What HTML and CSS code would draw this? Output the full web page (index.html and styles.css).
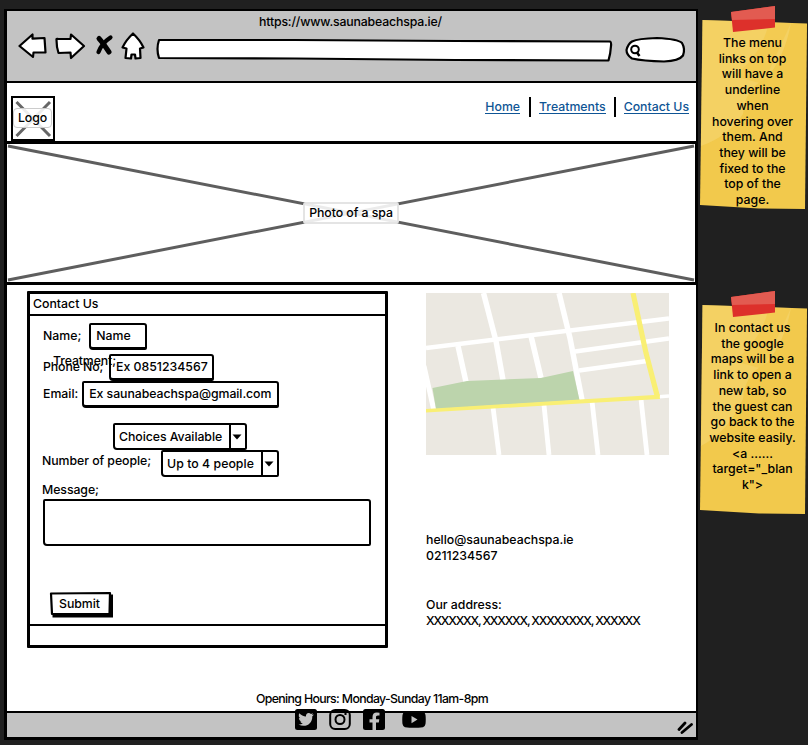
FILE: index.html
```html
<!DOCTYPE html>
<html lang="en">
<head>
<meta charset="utf-8">
<title>Sauna Beach Spa – Contact</title>
<link rel="stylesheet" href="styles.css">
</head>
<body>
<main class="board">
  <section class="browser">
    <div class="toolbar">
      <div class="url">https://www.saunabeachspa.ie/</div>
      <div class="controls">
        <svg class="nav-icons" viewBox="0 0 130 32" width="130" height="32">
          <g fill="#fff" stroke="#000" stroke-width="2.2" stroke-linejoin="round">
            <path d="M1.500 16 14.500 4.500v4.200L26.500 8 27.500 22.500 15.500 22.500 15 27Z"/>
            <path d="M38.500 10Q38 8.500 40 8.800L52.500 9 53 4.500 66 16 53 28 52.500 22.500 40.500 23Q38.500 17 38.500 10Z"/>
            <path d="M115 3.500Q122 10 125.500 17.500L122 18.500 122.500 28 117.500 28.500 117 24.500 113.500 24.500 113 28.500 107.500 28 108.500 18.500 104.500 17.500Q108 10 115 3.500Z"/>
          </g>
          <path d="M81 8.500Q85 13 91 22" stroke="#000" stroke-width="5" stroke-linecap="round" fill="none"/>
          <path d="M92.500 7.500Q84 13 80.500 22" stroke="#000" stroke-width="4.200" stroke-linecap="round" fill="none"/>
        </svg>
        <svg class="address" viewBox="0 0 458 24" width="458" height="24"><path d="M4 2 140 2 300 3 455 3.500Q456.500 4 456 8 455.500 16 453.500 22.500L300 22 140 20.500 4 20Q1 11 4 2Z" fill="#fff" stroke="#000" stroke-width="2.200" stroke-linejoin="round"/></svg>
        <svg class="search" viewBox="0 0 62 28" width="62" height="28">
          <path d="M7 5.500Q13 2.500 32 2 53 3 57 7 60.500 13 58 19.500 54 25 39 25.500 18 25 7 22.500 1.500 19 1.500 14 3 8 7 5.500Z" fill="#fff" stroke="#000" stroke-width="2.200"/>
          <circle cx="10" cy="13.500" r="3.800" fill="none" stroke="#000" stroke-width="2"/><path d="m11.500 16 3 4" stroke="#000" stroke-width="2.500"/>
        </svg>
      </div>
    </div>

    <header class="site-header">
      <div class="logo">
        <svg class="cross" viewBox="0 0 39 40" width="39" height="40"><path d="M2.500 3 36 37M36 3 2.500 37" stroke="#666" stroke-width="3"/></svg>
        <span>Logo</span>
      </div>
      <nav class="menu"><a href="#">Home</a><i></i><a href="#">Treatments</a><i></i><a href="#">Contact Us</a></nav>
    </header>

    <div class="hero">
      <svg class="cross" viewBox="0 0 690 138" width="690" height="138"><path d="M2 2 688 136M688 2 2 136" stroke="#5e5e5e" stroke-width="3"/></svg>
      <span>Photo of a spa</span>
    </div>

    <div class="content">
      <form class="panel">
        <div class="panel-title">Contact Us</div>
        <div class="panel-body">
          <div class="row"><label>Name;</label><span class="field name">Name</span></div>
          <div class="row phone-row"><label>Phone No;</label><label class="treatment">Treatment;</label><span class="field phone">Ex 0851234567</span></div>
          <div class="row"><label>Email:</label><span class="field email">Ex saunabeachspa@gmail.com</span></div>
          <div class="row choices-row"><span class="select choices"><b>Choices Available</b><svg viewBox="0 0 10 6" width="10" height="6"><path d="M.5.5h9L5 5.500Z"/></svg></span></div>
          <div class="row people-row"><label>Number of people;</label><span class="select people"><b>Up to 4 people</b><svg viewBox="0 0 10 6" width="10" height="6"><path d="M.5.5h9L5 5.500Z"/></svg></span></div>
          <label class="message-label">Message;</label>
          <div class="message"></div>
          <svg class="sketch-button" viewBox="0 0 65 27" width="65" height="27">
            <path d="M3.500 23V26.500H64V3.500H61Z"/>
            <path d="M2 2.500 61 2 60.500 23 3 23Z" fill="#fff" stroke="#000" stroke-width="2.200" stroke-linejoin="round"/>
            <text x="10" y="17.300" textLength="41">Submit</text>
          </svg>
        </div>
        <div class="panel-foot"></div>
      </form>

      <aside class="info">
        <svg class="map" viewBox="0 0 243 162" width="243" height="162">
          <rect width="243" height="162" fill="#ebe8e1"/>
          <g stroke="#fff" fill="none">
            <path d="M0 55 243 25.500" stroke-width="4.500"/>
            <path d="M57.500 0 70 48 77 87" stroke-width="5.500"/>
            <path d="M133 0 144 45 156 107" stroke-width="5.500"/>
            <path d="M32 53 40 89M105 43 115 85" stroke-width="5.500"/>
            <path d="M149 58.500 243 45.500M153 77.500 221 68" stroke-width="4.300"/>
            <path d="M-2 73 8 118" stroke-width="5"/>
            <path d="M67 114 73 162M118 112 123 162M166 108 172 162M215 106 221 162" stroke-width="4.800"/>
            <path d="M230 104 243 103" stroke-width="3.500"/>
          </g>
          <path d="M6.500 95 41 88 115 85 147 78 153.500 107 10 116Z" fill="#bcd4ac"/>
          <path d="M0 116 154 106.600 228 102 233.500 101 234 106 154 110.500 0 119.500Z" fill="#f9ef74"/>
          <path d="M207 0 220 60 231.500 104" stroke="#f9ef74" stroke-width="5.200" fill="none"/>
        </svg>
        <p class="reach">hello@saunabeachspa.ie<br>0211234567</p>
        <p class="where">Our address:<br><span>XXXXXXX, XXXXXX, XXXXXXXX, XXXXXX</span></p>
      </aside>
    </div>

    <div class="hours">Opening Hours: Monday-Sunday 11am-8pm</div>
    <footer class="statusbar">
      <div class="social">
        <svg viewBox="0 0 22 21" width="22" height="21"><rect width="22" height="21" rx="2.500"/><path d="M3.500 15.500C10 19 17.500 15.500 17.300 7.300L19 5.500 17 6 18 4.200 16 5C13.500 2.700 10.500 4.700 11 7.500 8.500 7.500 6 6.300 4.300 4.300 3.300 6.300 3.800 8.300 5.200 9.300L3.900 8.900C4 10.800 5 11.900 6.500 12.300L5.200 12.400C5.700 13.500 6.500 14.200 8 14.300 6.500 15.400 5 15.700 3.500 15.500Z" fill="#c3c3c3"/></svg>
        <svg viewBox="0 0 22 21" width="22" height="21" fill="none" stroke="#000" stroke-width="2"><rect x="1.200" y="1" width="19.600" height="19" rx="5"/><circle cx="11" cy="10.500" r="4.500"/><circle cx="16.500" cy="4.900" r="1.200" fill="#000" stroke="none"/></svg>
        <svg viewBox="0 0 22 21" width="22" height="21"><rect width="22" height="21" rx="2.500"/><path d="M9.500 21V13.500H6.500V10.300H9.500V8C9.500 5 11.200 3.600 13.700 3.600L16.500 3.800V6.500H15C13.500 6.500 13 7.200 13 8.300V10.300H16.300L15.800 13.500H13V21Z" fill="#c3c3c3"/></svg>
        <svg class="yt" viewBox="0 0 24 17" width="24" height="17"><path d="M3 .8Q12-.5 21 .8 23 1.200 23.500 4 24 8.500 23.500 13 23 15.700 21 16.200 12 17.500 3 16.200 1 15.700.5 13 0 8.500.5 4 1 1.200 3 .8Z"/><path d="M9.500 5v7.200l6-3.600Z" fill="#c3c3c3"/></svg>
      </div>
      <svg class="grip" viewBox="0 0 16 13" width="16" height="13"><path d="M2 8.500 8 2M5 11.500 14.500 3.500" stroke="#000" stroke-width="2.800" stroke-linecap="round"/></svg>
    </footer>
  </section>

  <aside class="notes">
    <div class="note first">
      <svg class="paper" viewBox="0 0 108 204" width="108" height="204">
        <path d="M3.500 14 108 17.500 106 203 60 202.500 1 199Z" fill="#f2c94c"/>
        <path d="M3.500 14 92 17Q86 50 68 72 46 82 44 108 30 130 2 140Z" fill="#f6d97a" opacity=".5"/>
        <path d="M70 17 92 17 64 78 35 70Q62 50 70 17Z" fill="#f2c94c" opacity=".7"/>
        <path d="M32 6 76 0V21.500L34 26Z" fill="#dd302b"/><path d="M32 6 76 0V13L33 14Z" fill="#e25b51"/>
      </svg>
      <p>The menu<br>links on top<br>will have a<br>underline<br>when<br>hovering over<br>them. And<br>they will be<br>fixed to the<br>top of the<br>page.</p>
    </div>
    <div class="note second">
      <svg class="paper" viewBox="0 0 108 224" width="108" height="224">
        <path d="M3.500 14 108 17.500 106 223 60 222.500 1 219Z" fill="#f2c94c"/>
        <path d="M3.500 14 92 17Q86 50 68 72 46 82 44 108 30 140 2 155Z" fill="#f6d97a" opacity=".5"/>
        <path d="M70 17 92 17 64 78 35 70Q62 50 70 17Z" fill="#f2c94c" opacity=".7"/>
        <path d="M32 6 76 0V21.500L34 26Z" fill="#dd302b"/><path d="M32 6 76 0V13L33 14Z" fill="#e25b51"/>
      </svg>
      <p>In contact us<br>the google<br>maps will be a<br>link to open a<br>new tab, so<br>the guest can<br>go back to the<br>website easily.<br>&lt;a ......<br>target="_blan<br>k"&gt;</p>
    </div>
  </aside>
</main>
</body>
</html>
```
FILE: styles.css
```css
* { box-sizing: border-box; }
body { margin: 0; background: #202020; color: #000; font: 500 12.3px/16px Inter, "Liberation Sans", sans-serif; }
p { margin: 0; }
svg { display: block; flex: none; }

.board { display: flex; width: 808px; height: 745px; overflow: hidden; padding: 9px 0 0 4px; }
.browser { display: flex; flex-direction: column; width: 694px; height: 731px; border: solid #000; border-width: 2px 2px 3px 3px; background: #fff; flex: none; }

.toolbar { height: 72px; background: #c3c3c3; border-bottom: 2px solid #000; flex: none; }
.url { height: 16px; margin-top: 3px; padding-left: 252px; letter-spacing: -.16px; }
.controls { display: flex; align-items: flex-start; padding-left: 11px; }
.address { margin: 8px 0 0 7px; }
.search { margin: 6px 0 0 12px; }

.site-header { display: flex; justify-content: space-between; height: 59px; padding: 13px 7px 0 4px; flex: none; }
.logo { display: grid; place-items: center; width: 44px; height: 45px; border: 2.500px solid #000; }
.logo > *, .hero > * { grid-area: 1 / 1; }
.logo span { padding: 1px 4px; margin: -2px 0 0 -1px; border: 1px solid #ccc; border-radius: 4px; background: rgba(255, 255, 255, .88); letter-spacing: -.1px; }
.menu { display: flex; align-items: flex-start; height: 24px; }
.menu a { margin-top: 3px; height: 15px; line-height: 15px; border-bottom: 1px solid #0f5595; color: #0f5595; text-decoration: none; white-space: nowrap; }
.menu a:first-child { margin-right: 1px; }
.menu i { width: 2px; height: 20px; margin: 1px 8px 0; background: #000; }

.hero { display: grid; place-items: center; height: 144px; margin: -1px -1px 0 -3px; border: solid #000; border-width: 3px 2px; flex: none; }
.hero span { padding: 1px 4px; border: 2px solid #e4e4e4; border-radius: 3px; background: rgba(255, 255, 255, .88); letter-spacing: -.05px; }

.content { display: flex; height: 404px; padding: 6px 0 0 20px; flex: none; }
.panel { width: 361px; height: 357px; border: 3px solid #000; border-radius: 1px; flex: none; }
.panel-title { height: 22px; padding: 2px 3px; border-bottom: 2px solid #000; }
.panel-body { height: 308px; padding: 7px 0 0 13px; }
.panel-foot { height: 21px; border-top: 2px solid #000; }
.row { position: relative; display: flex; align-items: center; height: 27px; white-space: nowrap; }
.row label { margin-top: -1px; }
.field, .select, .message { border: 2.500px solid #000; border-radius: 2px 3px 2px 4px; background: #fff; }
.field { display: flex; align-items: center; height: 27px; padding: 0 5px; border-bottom-width: 3px; }
.name { width: 58px; margin-left: 8px; }
.phone-row { margin-top: 4px; }
.phone-row label { width: 66px; letter-spacing: -.1px; }
.phone-row .treatment { position: absolute; left: 10px; top: 0; z-index: 1; }
.phone { width: 105px; }
.email { width: 197px; margin-left: 4px; letter-spacing: -.06px; }
.choices-row { margin-top: 15px; padding-left: 70px; }
.select { display: flex; align-items: center; justify-content: space-between; height: 27px; padding: 0 3px 0 4px; }
.select b { display: flex; align-items: center; height: 100%; font-weight: 500; border-right: 2px solid #000; letter-spacing: -.06px; }
.choices { width: 134px; }
.choices b { width: 112px; }
.people { width: 118px; margin-left: 10px; }
.people b { width: 96px; letter-spacing: .04px; }
.people-row label { margin: -6px 0 0 -1px; letter-spacing: -.05px; }
.message-label { display: block; height: 22px; padding-top: 5px; margin-left: -1px; letter-spacing: -.06px; }
.message { width: 328px; height: 47px; }
.sketch-button { margin: 45px 0 0 6px; }

.info { margin: 2px 0 0 38px; width: 250px; }
.reach { margin-top: 77px; }
.where { margin-top: 33px; white-space: nowrap; }
.where span { letter-spacing: -1.200px; }

.hours { height: 26px; padding: 6px 0 0 249px; white-space: nowrap; letter-spacing: -.64px; margin-top: -4px; flex: none; }
.statusbar { display: flex; justify-content: space-between; flex: 1; border-top: 2px solid #000; background: #c3c3c3; }
.social { display: flex; gap: 12px; height: 21px; margin: -4px 0 0 288px; }
.social .yt { margin: 2px 0 0 5px; }
.grip { margin: 8px 3px 0 0; }

.notes { display: flex; flex-direction: column; width: 108px; margin-left: 1px; flex: none; }
.note { display: grid; width: 108px; line-height: 15.700px; text-align: center; white-space: nowrap; }
.note > * { grid-area: 1 / 1; }
.note p { padding: 29px 1px 0 0; }
.first { height: 204px; margin-top: -3px; }
.second { height: 224px; margin-top: 81px; }
```
